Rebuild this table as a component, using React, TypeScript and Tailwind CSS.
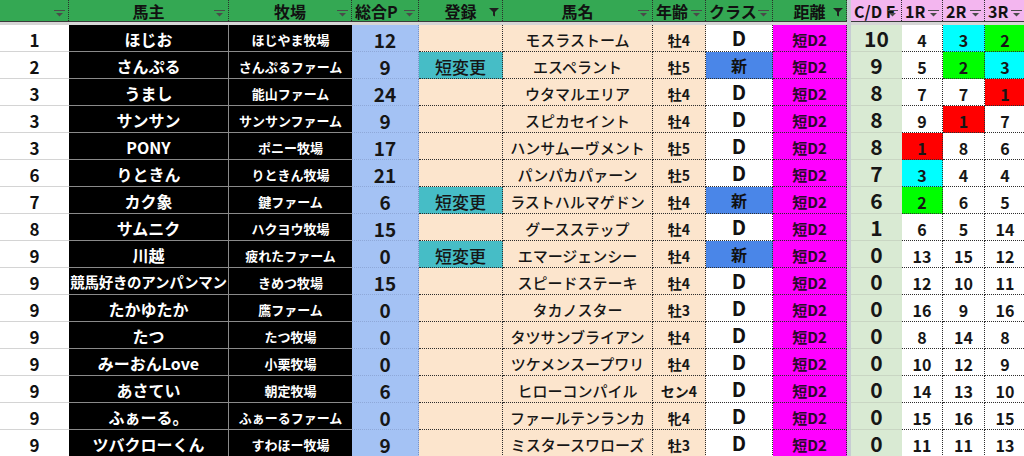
import React from "react";

type Row = {
  rank: number;
  owner: string;
  farm: string;
  total: number;
  reg: string;
  horse: string;
  age: string;
  cls: string;
  cdf: number;
  r: [number, number, number];
};

const ROWS: Row[] = [
  { rank: 1, owner: "ほじお", farm: "ほじやま牧場", total: 12, reg: "", horse: "モスラストーム", age: "牡4", cls: "D", cdf: 10, r: [4, 3, 2] },
  { rank: 2, owner: "さんぷる", farm: "さんぷるファーム", total: 9, reg: "短変更", horse: "エスペラント", age: "牡5", cls: "新", cdf: 9, r: [5, 2, 3] },
  { rank: 3, owner: "うまし", farm: "能山ファーム", total: 24, reg: "", horse: "ウタマルエリア", age: "牡4", cls: "D", cdf: 8, r: [7, 7, 1] },
  { rank: 3, owner: "サンサン", farm: "サンサンファーム", total: 9, reg: "", horse: "スピカセイント", age: "牡4", cls: "D", cdf: 8, r: [9, 1, 7] },
  { rank: 3, owner: "PONY", farm: "ポニー牧場", total: 17, reg: "", horse: "ハンサムーヴメント", age: "牡5", cls: "D", cdf: 8, r: [1, 8, 6] },
  { rank: 6, owner: "りときん", farm: "りときん牧場", total: 21, reg: "", horse: "パンパカパァーン", age: "牡5", cls: "D", cdf: 7, r: [3, 4, 4] },
  { rank: 7, owner: "カク象", farm: "鍵ファーム", total: 6, reg: "短変更", horse: "ラストハルマゲドン", age: "牡4", cls: "新", cdf: 6, r: [2, 6, 5] },
  { rank: 8, owner: "サムニク", farm: "ハクヨウ牧場", total: 15, reg: "", horse: "グースステップ", age: "牡4", cls: "D", cdf: 1, r: [6, 5, 14] },
  { rank: 9, owner: "川越", farm: "疲れたファーム", total: 0, reg: "短変更", horse: "エマージェンシー", age: "牡4", cls: "新", cdf: 0, r: [13, 15, 12] },
  { rank: 9, owner: "競馬好きのアンパンマン", farm: "きめつ牧場", total: 15, reg: "", horse: "スピードステーキ", age: "牡4", cls: "D", cdf: 0, r: [12, 10, 11] },
  { rank: 9, owner: "たかゆたか", farm: "鷹ファーム", total: 0, reg: "", horse: "タカノスター", age: "牡3", cls: "D", cdf: 0, r: [16, 9, 16] },
  { rank: 9, owner: "たつ", farm: "たつ牧場", total: 0, reg: "", horse: "タツサンブライアン", age: "牡4", cls: "D", cdf: 0, r: [8, 14, 8] },
  { rank: 9, owner: "みーおんLove", farm: "小栗牧場", total: 0, reg: "", horse: "ツケメンスープワリ", age: "牡4", cls: "D", cdf: 0, r: [10, 12, 9] },
  { rank: 9, owner: "あさてい", farm: "朝定牧場", total: 6, reg: "", horse: "ヒローコンパイル", age: "セン4", cls: "D", cdf: 0, r: [14, 13, 10] },
  { rank: 9, owner: "ふぁーる。", farm: "ふぁーるファーム", total: 0, reg: "", horse: "ファールテンランカ", age: "牝4", cls: "D", cdf: 0, r: [15, 16, 15] },
  { rank: 9, owner: "ツバクローくん", farm: "すわほー牧場", total: 9, reg: "", horse: "ミスタースワローズ", age: "牡3", cls: "D", cdf: 0, r: [11, 11, 13] },
];

const placeColor = (n: number) => {
  if (n === 1) return "bg-[#ff0000]";
  if (n === 2) return "bg-[#00ff00]";
  if (n === 3) return "bg-[#00ffff]";
  return "bg-white";
};

const DropIcon = () => (
  <svg width="11" height="7" viewBox="0 0 11 7" className="shrink-0">
    <rect x="0" y="0" width="11" height="1" fill="#4a4a4a" />
    <path d="M2 3 H9 L5.5 6.5 Z" fill="#4a4a4a" />
  </svg>
);

const FunnelIcon = () => (
  <svg width="10" height="10" viewBox="0 0 10 10" className="shrink-0">
    <path d="M0 1 H10 L6 5 V9.5 L4 8.5 V5 Z" fill="#1f1f1f" />
  </svg>
);

type HeadProps = {
  w: string;
  label: string;
  funnel?: boolean;
  left?: boolean;
};

const Head = ({ w, label, funnel, left }: HeadProps) => (
  <div
    className={`relative flex h-full shrink-0 items-center overflow-hidden border-r border-dotted border-[#2d2d2d] ${w} ${
      left ? "justify-start pl-[3px]" : "justify-center"
    }`}
  >
    <span className="whitespace-nowrap text-[16px] font-bold leading-[20px] text-[#111]">{label}</span>
    <span className="absolute right-[3px] bottom-[4px] flex items-end">
      {funnel ? <FunnelIcon /> : <DropIcon />}
    </span>
  </div>
);

const App: React.FC = () => {
  return (
    <div
      className="flex h-[456px] w-[1024px] overflow-hidden bg-white"
      style={{ fontFamily: "'Noto Sans CJK JP', 'Noto Sans', sans-serif" }}
    >
      {/* left frozen block */}
      <div className="flex w-[847px] shrink-0 flex-col">
        <div className="flex h-[21px] shrink-0 bg-[#34a853]">
          <Head w="w-[69px]" label="" />
          <Head w="w-[160px]" label="馬主" />
          <Head w="w-[123px]" label="牧場" />
          <Head w="w-[67px]" label="総合P" left />
          <Head w="w-[84px]" label="登録" funnel />
          <Head w="w-[150px]" label="馬名" />
          <Head w="w-[53px]" label="年齢" left />
          <Head w="w-[67px]" label="クラス" left />
          <Head w="w-[74px]" label="距離" funnel />
        </div>
        <div className="h-[1px] shrink-0 bg-[#3a3a3a]" />
        <div className="h-[3px] shrink-0 bg-[#d6d6d6]" />
        {ROWS.map((row, i) => (
          <div key={i} className="flex h-[27px] shrink-0 leading-none">
            <div className="flex w-[69px] shrink-0 items-center justify-center border-b border-[#d4d4d4] bg-white pt-[2px] text-[17px] font-bold text-[#111]">
              {row.rank}
            </div>
            <div
              className={`flex w-[160px] shrink-0 items-center justify-center overflow-hidden whitespace-nowrap border-r border-b border-[#8a8a8a] bg-black pt-[2px] font-bold text-white ${
                row.owner.length > 9 ? "text-[14.5px] tracking-[-0.3px]" : "text-[16px]"
              }`}
            >
              {row.owner}
            </div>
            <div className="flex w-[123px] shrink-0 items-center justify-center whitespace-nowrap border-b border-[#8a8a8a] bg-black pt-[2px] text-[13px] font-bold text-white">
              {row.farm}
            </div>
            <div className="flex w-[67px] shrink-0 items-center justify-center border-r border-b border-dotted border-r-[#7a93c4] border-b-[#8ea8d8] bg-[#a4c2f4] pt-[2px] text-[19px] font-bold text-[#161616]">
              {row.total}
            </div>
            <div
              className={`flex w-[84px] shrink-0 items-center justify-center border-r border-b border-dotted border-[#2d2d2d] pt-[2px] text-[17px] font-medium text-[#161616] ${
                row.reg ? "bg-[#46bdc6]" : "bg-[#fce5cd]"
              }`}
            >
              {row.reg}
            </div>
            <div className="flex w-[150px] shrink-0 items-center justify-center whitespace-nowrap border-r border-b border-dotted border-[#2d2d2d] bg-[#fce5cd] pt-[2px] text-[15px] font-medium text-[#161616]">
              {row.horse}
            </div>
            <div className="flex w-[53px] shrink-0 items-center justify-center whitespace-nowrap border-r border-b border-dotted border-[#2d2d2d] bg-[#fce5cd] pt-[3px] text-[14px] font-bold text-[#161616]">
              {row.age}
            </div>
            <div
              className={`flex w-[67px] shrink-0 items-center justify-center border-r border-b border-dotted border-[#2d2d2d] font-bold text-[#111] ${
                row.cls === "新" ? "bg-[#4a86e8] text-[16px]" : "bg-white text-[20px]"
              }`}
            >
              {row.cls}
            </div>
            <div className="flex w-[74px] shrink-0 items-center justify-center border-r border-b border-dotted border-[#2d2d2d] bg-[#ff00ff] pt-[3px] text-[15px] font-bold text-[#2a0a2a]">
              短D2
            </div>
          </div>
        ))}
      </div>

      {/* freeze line */}
      <div className="w-[4px] shrink-0 bg-[#c7ccd3]" />

      {/* right block */}
      <div className="flex flex-1 flex-col">
        <div className="flex h-[21px] shrink-0 bg-[#f3b6ef]">
          <Head w="w-[51px]" label="C/D F" left />
          <Head w="w-[41px]" label="1R" left />
          <Head w="w-[42px]" label="2R" left />
          <Head w="w-[41px]" label="3R" left />
        </div>
        <div className="h-[1px] shrink-0 bg-[#3a3a3a]" />
        <div className="h-[3px] shrink-0 bg-[#d6d6d6]" />
        {ROWS.map((row, i) => (
          <div key={i} className="flex h-[27px] shrink-0 leading-none">
            <div className="flex w-[51px] shrink-0 items-center justify-center border-b border-[#c9d6c3] bg-[#d9ead3] text-[21px] font-bold text-[#161616]">
              {row.cdf}
            </div>
            {row.r.map((n, j) => (
              <div
                key={j}
                className={`flex shrink-0 items-center justify-center border-r border-b border-dotted border-[#2d2d2d] pt-[3px] text-[16px] font-bold text-[#161616] ${
                  j === 1 ? "w-[42px]" : "w-[41px]"
                } ${placeColor(n)}`}
              >
                {n}
              </div>
            ))}
          </div>
        ))}
      </div>
    </div>
  );
};

export default App;
